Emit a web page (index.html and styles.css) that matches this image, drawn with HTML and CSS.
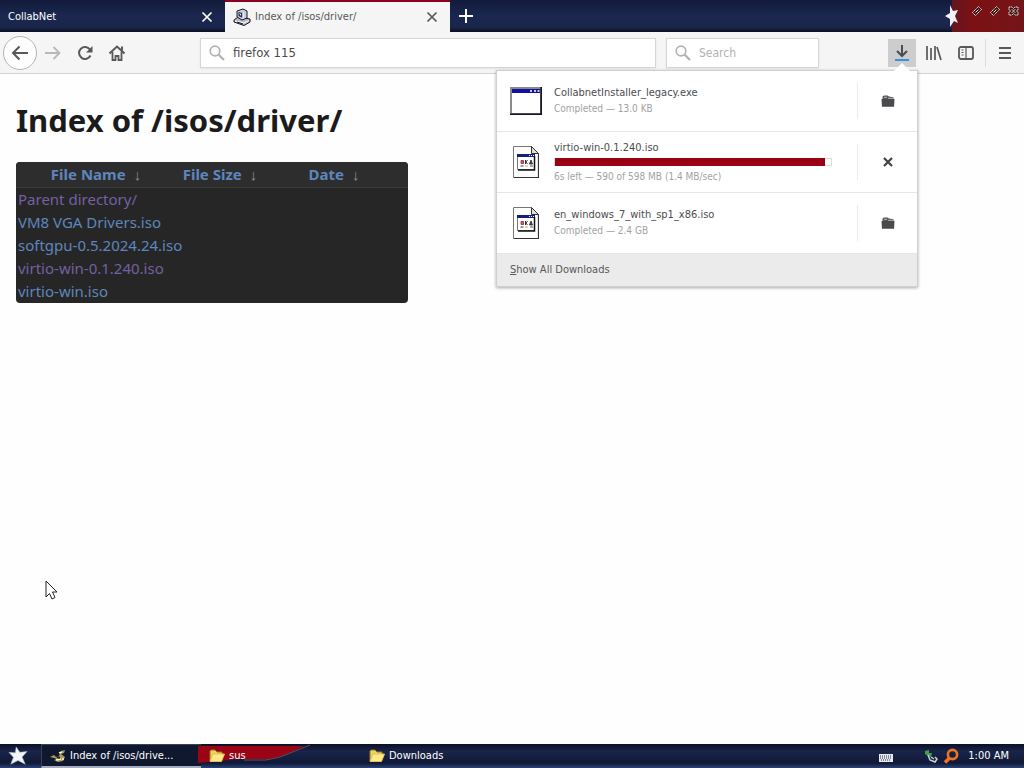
FILE: index.html
```html
<!DOCTYPE html>
<html lang="en">
<head>
<meta charset="utf-8">
<title>Index of /isos/driver/</title>
<link rel="stylesheet" href="styles.css">
</head>
<body>
<svg class="sprites" aria-hidden="true">
  <symbol id="close" viewBox="0 0 12 12"><path d="M1.5 1.5l9 9M10.5 1.5l-9 9" fill="none" stroke="currentColor" stroke-width="1.700"/></symbol>
  <symbol id="cancel" viewBox="0 0 10 10"><path d="M1 1l8 8M9 1L1 9" fill="none" stroke="currentColor" stroke-width="2.200"/></symbol>
  <symbol id="search" viewBox="0 0 16 16"><circle cx="6" cy="6" r="4.800" fill="none" stroke="currentColor" stroke-width="1.700"/><path d="M9.500 9.500L15 15" stroke="currentColor" stroke-width="2.200"/></symbol>
  <symbol id="folder" viewBox="0 0 14 12"><path d="M1.500 4V1.500L3 .5h3.500L8 1.500l4.500.8V4z" fill="#58585a"/><path d="M3 2.300h3M7 3.300h5" stroke="#ddd" stroke-width=".7"/><path d="M.5 4h13l-.5 7.700H1z" fill="#4a4a4c"/></symbol>
  <symbol id="iso" viewBox="0 0 26 32">
    <path d="M.5.5h18l7 7v24H.5z" fill="#fdfdfd" stroke="#777"/>
    <path d="M18.500.5v7h7z" fill="#ddd" stroke="#333"/>
    <path d="M25.500 8v23.500H1" fill="none" stroke="#333" stroke-width="1.200"/>
    <path d="M4.500 8.500h17v15h-17z" fill="#fff" stroke="#777"/><path d="M4 8h18v3H4z" fill="#12207c"/>
    <path d="M16 9.500h1m1 0h1m1 0h1" stroke="#fff"/>
    <path d="M21.500 10v14H5" fill="none" stroke="#111" stroke-width="1.500"/>
    <path d="M8 14.500h2.500v3H8z" fill="#b66" stroke="#a22" stroke-width=".8"/>
    <path d="M12.500 14v4m2-4l-1.500 2 1.500 2" fill="none" stroke="#333"/>
    <path d="M16.500 18l1.500-4 1.500 4z" fill="#456" stroke="#222" stroke-width=".8"/>
    <path d="M7.500 20h3" stroke="#238"/><path d="M12 20h3" stroke="#da3"/><path d="M17 20h3" stroke="#555"/>
  </symbol>
  <symbol id="diamond" viewBox="0 0 10 10"><path d="M.5 6.500l6-6 3 3-6 6z" fill="#3c1212" stroke="#f2e8e8" stroke-dasharray="1.500 .5"/><path d="M3.500 6.500l3-3" stroke="#f2e8e8"/></symbol>
  <symbol id="yellow-folder" viewBox="0 0 16 14"><path d="M1 12V2l1-1h4l2 2h5v2" fill="#efd25b" stroke="#92752a"/><path d="M1 12.500L4 5h11.500l-3 7.500z" fill="#ffe98b" stroke="#e5bf50"/></symbol>
  <symbol id="star" viewBox="0 0 22 22"><path d="M9 1l4 6 8-1-5.500 6L19 20l-8-4-8 4 3-7.500L1 7l7 .5z" fill="#f3f4fa" stroke="#a9b1cc" stroke-width=".6"/></symbol>
</svg>

<header class="titlebar">
  <div class="tab">
    <span class="tab-title">CollabNet</span>
    <button class="tab-close" aria-label="Close tab CollabNet"><svg width="12" height="12"><use href="#close"/></svg></button>
  </div>
  <div class="tab tab-active">
    <svg class="favicon" width="18" height="18" viewBox="0 0 18 18">
      <path d="M1 12l4-3 12 2v3l-6 3.500L1 14z" fill="#b8bac5" stroke="#16161e"/>
      <path d="M4 3l6-2 4 2v7l-5 2-5-3z" fill="#cdd0da" stroke="#16161e"/>
      <path d="M5.500 4l4 1v5l-4-2z" fill="#243060"/><path d="M6 5l2 1v2z" fill="#fff"/>
      <path d="M10 5v6" stroke="#fff"/><path d="M2 13l9 2 5-2.500" fill="none" stroke="#fff"/><path d="M4 14l6 2" stroke="#16161e"/>
    </svg>
    <span class="tab-title">Index of /isos/driver/</span>
    <button class="tab-close" aria-label="Close tab Index of /isos/driver/"><svg width="12" height="12"><use href="#close"/></svg></button>
  </div>
  <button class="new-tab" aria-label="New tab"><svg width="14" height="14" viewBox="0 0 14 14"><path d="M7 0v14M0 7h14" stroke="#fff" stroke-width="2"/></svg></button>
  <svg class="title-star" width="16" height="24" viewBox="0 0 16 24"><path d="M6 1l3 6 5-1-3 6 3 7-4-2-4 6v-8l-5-3 5-3z" fill="#f3f0fa"/></svg>
  <div class="window-buttons">
    <button aria-label="Minimize"><svg width="10" height="10"><use href="#diamond"/></svg></button>
    <button aria-label="Restore"><svg width="10" height="10"><use href="#diamond"/></svg></button>
    <button aria-label="Close"><svg width="11" height="10" viewBox="0 0 11 10"><path d="M1 1h3l1.500 1.500L7 1h3v3L8.500 5 10 6v3H7L5.500 7.500 4 9H1V6l1.500-1L1 4z" fill="#3c1212" stroke="#f2e8e8" stroke-dasharray="1.500 .5"/><path d="M3.500 3l4 4M7.500 3l-4 4" stroke="#f2e8e8" stroke-width=".8"/></svg></button>
  </div>
</header>

<nav class="toolbar" aria-label="Navigation">
  <button class="back" aria-label="Back"><svg width="18" height="16" viewBox="0 0 18 16"><path d="M17 8H2M8.500 1.500L2 8l6.500 6.500" fill="none" stroke="currentColor" stroke-width="2"/></svg></button>
  <button class="tool disabled" aria-label="Forward" disabled><svg width="16" height="16" viewBox="0 0 16 16"><path d="M0 8h14M8.500 2l6 6-6 6" fill="none" stroke="currentColor" stroke-width="1.800"/></svg></button>
  <button class="tool" aria-label="Reload"><svg width="16" height="16" viewBox="0 0 16 16"><path d="M13 4.500A6 6 0 1 0 13.500 10.500" fill="none" stroke="currentColor" stroke-width="2"/><path d="M15.500 1v6.500H9z" fill="currentColor"/></svg></button>
  <button class="tool" aria-label="Home"><svg width="16" height="16" viewBox="0 0 16 16"><path d="M.5 8.500L8 1.500l7.500 7" fill="none" stroke="currentColor" stroke-width="2"/><path d="M3.500 7v8h3v-4h3v4h3V7" fill="none" stroke="currentColor" stroke-width="1.800"/><path d="M12 1.500h2V6l-2-1.500z" fill="currentColor"/></svg></button>
  <label class="field address"><svg width="16" height="16"><use href="#search"/></svg><input type="text" value="firefox 115" aria-label="Address"></label>
  <label class="field search"><svg width="16" height="16"><use href="#search"/></svg><input type="search" placeholder="Search" aria-label="Search"></label>
  <div class="toolbar-end">
    <button class="tool pressed" aria-label="Downloads"><svg width="16" height="18" viewBox="0 0 16 18"><path d="M8 1v11M3 7l5 5 5-5" fill="none" stroke="#4c4c4e" stroke-width="2"/><path d="M1 16h14" stroke="#3b8fe0" stroke-width="2"/></svg></button>
    <button class="tool" aria-label="Library"><svg width="16" height="16" viewBox="0 0 16 16"><path d="M1 1v14M5 3v12M9 1v14M11 2l4 13" fill="none" stroke="currentColor" stroke-width="1.700"/></svg></button>
    <button class="tool" aria-label="Sidebars"><svg width="16" height="14" viewBox="0 0 16 14"><rect x="1" y="1" width="14" height="12" rx="2" fill="none" stroke="currentColor" stroke-width="1.800"/><path d="M8 1v12M3.500 4h2M3.500 6.500h2M3.500 9h2" stroke="currentColor" stroke-width="1.200"/></svg></button>
    <button class="tool menu" aria-label="Menu"><svg width="12" height="14" viewBox="0 0 12 14"><path d="M0 2h12M0 7h12M0 12h12" stroke="currentColor" stroke-width="1.800"/></svg></button>
  </div>

  <section class="downloads" aria-label="Downloads">
    <article class="download">
      <svg class="file-icon" width="32" height="28" viewBox="0 0 32 28"><path d="M0 0h32v28H0z" fill="#8a8a8a"/><path d="M2 6h28v20H2z" fill="#fff"/><path d="M2 2h28v4H2z" fill="#1010a8"/><path d="M20 4h2m2 0h2m1.500 0h2" stroke="#ccc" stroke-width="2"/><path d="M31.200 0v27.200H0" fill="none" stroke="#151520" stroke-width="1.600"/></svg>
      <div class="details"><div class="name">CollabnetInstaller_legacy.exe</div><div class="status">Completed — 13.0 KB</div></div>
      <button class="action" aria-label="Open folder"><svg width="14" height="12"><use href="#folder"/></svg></button>
    </article>
    <article class="download">
      <svg class="file-icon" width="26" height="32"><use href="#iso"/></svg>
      <div class="details"><div class="name">virtio-win-0.1.240.iso</div><div class="progress" role="progressbar" aria-label="virtio-win-0.1.240.iso" aria-valuenow="590" aria-valuemax="598"><div class="bar"></div></div><div class="status">6s left — 590 of 598 MB (1.4 MB/sec)</div></div>
      <button class="action" aria-label="Cancel download"><svg width="10" height="10"><use href="#cancel"/></svg></button>
    </article>
    <article class="download">
      <svg class="file-icon" width="26" height="32"><use href="#iso"/></svg>
      <div class="details"><div class="name">en_windows_7_with_sp1_x86.iso</div><div class="status">Completed — 2.4 GB</div></div>
      <button class="action" aria-label="Open folder"><svg width="14" height="12"><use href="#folder"/></svg></button>
    </article>
    <button class="show-all"><u>S</u>how All Downloads</button>
  </section>
</nav>

<main class="page">
  <h1>Index of /isos/driver/</h1>
  <table class="listing">
    <thead><tr>
      <th class="col-name"><a href="#name">File Name</a><a class="sort" href="#name-desc">↓</a></th>
      <th class="col-size"><a href="#size">File Size</a><a class="sort" href="#size-desc">↓</a></th>
      <th><a href="#date">Date</a><a class="sort" href="#date-desc">↓</a></th>
    </tr></thead>
    <tbody>
      <tr><td><a class="visited" href="#parent">Parent directory/</a></td><td></td><td></td></tr>
      <tr><td><a href="#vm8">VM8 VGA Drivers.iso</a></td><td></td><td></td></tr>
      <tr><td><a href="#softgpu">softgpu-0.5.2024.24.iso</a></td><td></td><td></td></tr>
      <tr><td><a class="visited" href="#virtio240">virtio-win-0.1.240.iso</a></td><td></td><td></td></tr>
      <tr><td><a href="#virtio">virtio-win.iso</a></td><td></td><td></td></tr>
    </tbody>
  </table>
  <svg class="pointer" width="13" height="20" viewBox="0 0 13 20" aria-hidden="true"><path d="M1 1v16l3.500-3.500L7 19l3-1.500L7.500 12H12z" fill="#fff" stroke="#222"/></svg>
</main>

<footer class="taskbar">
  <button class="start" aria-label="Start"><svg width="22" height="20"><use href="#star"/></svg></button>
  <button class="task task-active"><svg width="16" height="14" viewBox="0 0 16 14"><path d="M0 8l4-2 2 2 3-1 2-5 4-1-1 3-3 1 4 3-2 4-5 1-4-2 3-1-3-1z" fill="#a99c60"/><path d="M6 11l5-1M9 4l3-1M12 10h2" stroke="#fff6c0" stroke-width="1.500"/><path d="M7 8l3 1" stroke="#22242c" stroke-width="2"/></svg><span>Index of /isos/drive...</span></button>
  <button class="task task-alert">
    <svg class="swoosh" width="114" height="22" viewBox="0 0 114 22" aria-hidden="true"><path d="M0 2h106L84 12 70 15H40L0 19z" fill="#9a0414"/><path d="M112 1L82 13l-14 3H46" fill="none" stroke="#6d4a5c"/></svg>
    <svg width="16" height="14"><use href="#yellow-folder"/></svg><span>sus</span></button>
  <button class="task"><svg width="16" height="14"><use href="#yellow-folder"/></svg><span>Downloads</span></button>
  <div class="tray">
    <svg class="keyboard" width="14" height="8" viewBox="0 0 14 8"><path d="M0 0h14v8H0z" fill="#e8eaf0"/><path d="M1 2h12M1 4h12M2 6h10" stroke="#222a40" stroke-dasharray="1 1"/></svg>
    <svg width="14" height="14" viewBox="0 0 14 14"><path d="M1 2l4-1v3h3l-1 4-3-1-3-2z" fill="#3da348"/><path d="M4 6l2 5 5 2 2-3-2-2M7 8l3 2" fill="none" stroke="#cdd3d8" stroke-width="1.500"/></svg>
    <svg width="16" height="16" viewBox="0 0 16 16"><circle cx="9.500" cy="6.500" r="4.600" fill="none" stroke="#ee7420" stroke-width="2.600"/><path d="M6.500 10L2 14.500" stroke="#ee7420" stroke-width="3.500"/></svg>
    <time>1:00 AM</time>
  </div>
</footer>
</body>
</html>
```
FILE: styles.css
```css
* { box-sizing: border-box; }
body {
  margin: 0;
  min-height: 100vh;
  display: flex;
  flex-direction: column;
  background: #fefefe;
  color: #3f3f41;
  font: 11px/14px "DejaVu Sans Condensed", "DejaVu Sans", sans-serif;
}
button { margin: 0; padding: 0; border: 0; background: none; color: inherit; font: inherit; }
svg { display: block; flex: none; }
.sprites { position: absolute; width: 0; height: 0; }

.titlebar { display: flex; height: 32px; background: linear-gradient(#121b3b, #1b2750 50%, #1a254a 85%, #0a1022); }
.tab { display: flex; align-items: center; flex: 0 1 225px; gap: 4px; padding: 2px 12px 0 8px; color: #fff; }
.tab-title { flex: 1; white-space: nowrap; }
.tab-active { border-top: 2px solid #8b0020; padding-top: 0; background: #f5f5f5; color: #58585a; }
.tab-close { color: #fff; }
.tab-active .tab-close { color: #58585a; }
.new-tab { width: 32px; display: grid; place-items: center; }
.title-star { margin: 4px 0 0 auto; z-index: 1; }
.window-buttons { display: flex; gap: 8px; margin-left: -8px; width: 72px; padding: 6px 4px 0 20px; background: linear-gradient(90deg, #66141f, #7c1114 30%, #741519); }
.window-buttons button { height: 10px; }

.toolbar { position: relative; display: flex; align-items: center; height: 42px; padding: 0 5px 0 3px; background: #f5f5f5; border-bottom: 1px solid #d2d2d2; color: #58585a; }
.back { width: 34px; height: 34px; display: grid; place-items: center; border: 1px solid #b5b5b5; border-radius: 50%; background: #fdfdfd; }
.tool { width: 28px; height: 28px; margin: 0 2px; display: grid; place-items: center; }
.disabled { color: #b9b9b9; }
.pressed { background: #cdcdcd; }
.field { display: flex; align-items: center; gap: 8px; height: 30px; min-width: 0; padding: 0 8px; background: #fff; border: 1px solid #d6d6d6; box-shadow: 0 1px 2px #0001; color: #b2b2b2; }
.field input { flex: 1; min-width: 0; border: 0; padding: 0; outline: 0; background: none; color: #4a4a4c; font: 13px/18px "DejaVu Sans Condensed", "DejaVu Sans", sans-serif; }
.field input::placeholder { color: #b2b2b2; opacity: 1; }
.address { flex: 1; margin-left: 67px; }
.search { flex: 0 0 153px; margin-left: 10px; }
.search input { font-size: 12px; }
.toolbar-end { display: flex; margin-left: 67px; }
.menu { width: 32px; margin-left: 3px; padding-left: 7px; border-left: 1px solid #dcdcdc; }

.downloads { position: absolute; top: 38px; right: 106px; width: 422px; z-index: 2; background: #fff; border: 1px solid #d0d0d0; box-shadow: 0 1px 3px #0005; }
.downloads::before { content: ""; position: absolute; top: -8px; right: 7px; border: 8px solid transparent; border-top: 0; border-bottom-color: #fff; }
.download { display: flex; align-items: center; height: 61px; border-bottom: 1px solid #e6e6e6; }
.file-icon { margin: 0 auto; }
.details { width: 303px; order: 1; padding-right: 25px; }
.action { width: 60px; height: 36px; order: 2; display: grid; place-items: center; border-left: 1px solid #ececec; color: #414143; }
.name { color: #4c4c4e; line-height: 16px; }
.status { color: #a2a2a2; font-size: 10px; line-height: 16px; }
.progress { height: 8px; margin: 2px 0 3px; border: 1px solid #ddddce; }
.bar { width: 98%; height: 8px; margin-top: -1px; background: #990012; }
.show-all { display: block; width: 100%; height: 32px; padding-left: 13px; text-align: left; background: #ebebeb; }

.page { position: relative; flex: 1; padding: 24px 16px; color: #1b1b1b; font-family: "Noto Sans", "Open Sans", sans-serif; }
h1 { margin: 0 0 20px; font-size: 31px; line-height: 44px; }
.listing { width: 392px; border-spacing: 0; background: #262626; border-radius: 4px; font-size: 15px; line-height: 23px; table-layout: fixed; overflow: hidden; }
.listing th { padding: 1px 4px 1px 0; background: #2d2d2d; border-bottom: 1px solid #393939; white-space: nowrap; }
.listing td { height: 23px; padding: 0 2px; white-space: nowrap; }
.listing a { color: #5e86bd; text-decoration: none; }
.listing a.visited { color: #7560a3; }
.listing a.sort { margin-left: 8px; color: #8793a6; font-weight: 400; }
.col-name { width: 164px; }
.col-size { width: 84px; }
.pointer { position: absolute; left: 45px; bottom: 144px; }

.taskbar { display: flex; height: 24px; background: linear-gradient(#0b1024, #192449 30%, #111936 80%, #2c4377); color: #fff; }
.start { width: 41px; padding-left: 7px; }
.task { position: relative; flex: 0 1 160px; display: flex; align-items: center; gap: 4px; padding-left: 8px; white-space: nowrap; }
.task > :not(.swoosh) { z-index: 1; }
.task-active { border: 1px solid #39415b; border-right: 0; border-bottom: 2px solid #a6acc0; background: #10182f; }
.swoosh { position: absolute; left: -3px; top: 0; }
.tray { display: flex; align-items: center; gap: 5px; margin-left: auto; padding-right: 15px; }
.tray .keyboard { margin: 4px 26px 0 0; }
.tray time { margin-left: 4px; }
```
